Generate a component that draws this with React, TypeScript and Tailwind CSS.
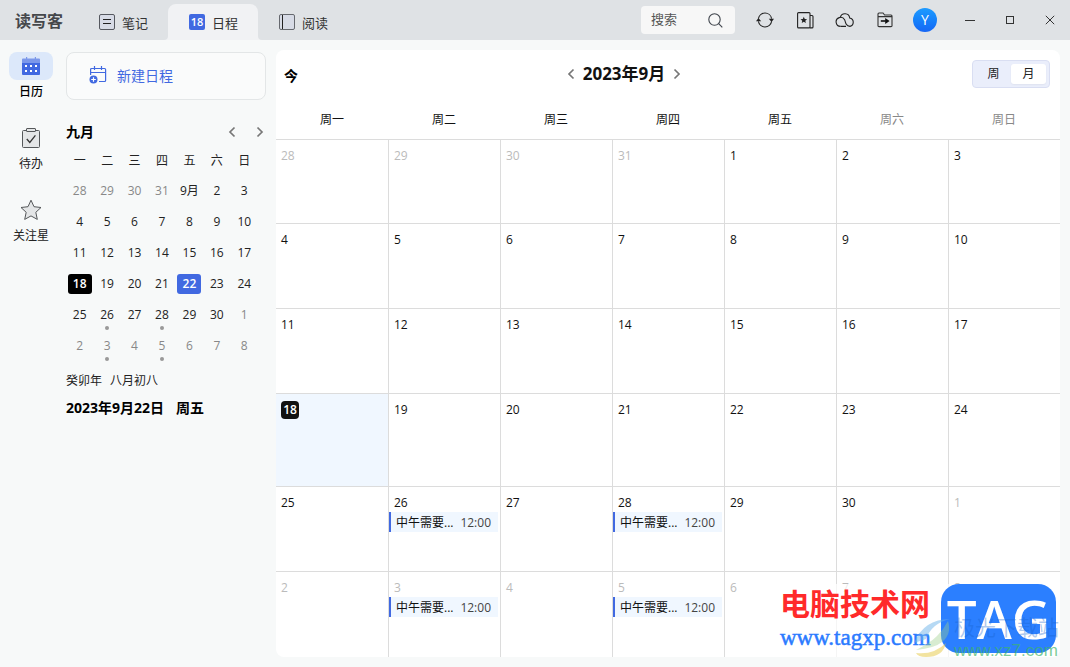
import React from 'react';

type DayCell = {
  label: string;
  muted?: boolean;
  today?: boolean;
  selected?: boolean;
  event?: boolean;
};

const WEEK = ['一', '二', '三', '四', '五', '六', '日'];
const ROW_HEIGHTS = ['h-[84px]', 'h-[85px]', 'h-[85px]', 'h-[93px]', 'h-[85px]', ''];

// 42 days starting from 8/28
const days: DayCell[] = Array.from({ length: 42 }, (_, i) => {
  if (i < 4) return { label: String(28 + i), muted: true };
  if (i < 34) {
    const d = i - 3;
    return { label: String(d), today: d === 18, selected: d === 22, event: d === 26 || d === 28 };
  }
  const d = i - 33;
  return { label: String(d), muted: true, event: d === 3 || d === 5 };
});

const weeks = Array.from({ length: 6 }, (_, i) => days.slice(i * 7, i * 7 + 7));

const Chevron: React.FC<{ right?: boolean }> = ({ right }) => (
  <svg width="8" height="12" viewBox="0 0 8 12" fill="none" stroke="#777" strokeWidth="1.7">
    <path d={right ? 'M1.5 1.5 6 6 1.5 10.5' : 'M6.5 1.5 2 6 6.5 10.5'} />
  </svg>
);

const NoteIcon = () => (
  <svg width="16" height="16" viewBox="0 0 16 16" fill="#d7dbe6" stroke="#55585f">
    <rect x="0.5" y="0.5" width="15" height="15" rx="1.5" />
    <path d="M4 5.5h8M4 9.5h8" stroke="#222" />
  </svg>
);

const ReadIcon = () => (
  <svg width="16" height="16" viewBox="0 0 16 16" fill="#d7dbe6" stroke="#66696f">
    <rect x="0.5" y="0.5" width="15" height="15" rx="1.5" />
    <path d="M3.5 1v14" stroke="#222" />
  </svg>
);

const TitleBar: React.FC = () => (
  <header className="flex h-10 shrink-0 items-center bg-[#dfe2e5]">
    <h1 className="w-[78px] pt-0.5 pl-[15px] text-[16px] leading-6 font-bold text-[#45474b]">读写客</h1>
    <nav className="flex h-full items-end text-[13px] text-[#333]">
      <button className="flex h-9 w-[90px] items-center gap-[7px] pl-[21px]">
        <NoteIcon />
        <span className="leading-6 pt-0.5">笔记</span>
      </button>
      <button className="relative flex h-9 w-[90px] items-center gap-[7px] rounded-t-lg bg-[#f1f2f4] pl-[21px]">
        <span className="flex h-4 w-4 items-center justify-center rounded-[2px] bg-[#4169e1] text-[11px] leading-4 font-semibold text-white">
          18
        </span>
        <span className="leading-6 pt-0.5">日程</span>
        <svg className="absolute bottom-0 -left-1" width="4" height="4" viewBox="0 0 4 4">
          <path d="M4 0v4H0Q4 4 4 0" fill="#f1f2f4" />
        </svg>
        <svg className="absolute -right-1 bottom-0" width="4" height="4" viewBox="0 0 4 4">
          <path d="M0 0v4h4Q0 4 0 0" fill="#f1f2f4" />
        </svg>
      </button>
      <button className="flex h-9 w-[90px] items-center gap-[7px] pl-[21px]">
        <ReadIcon />
        <span className="leading-6 pt-0.5">阅读</span>
      </button>
    </nav>

    <label className="mr-[10px] ml-auto flex h-7 w-[94px] items-center rounded bg-[#f7f7f7] pr-3 pl-[10px]">
      <input
        type="text"
        aria-label="搜索"
        placeholder="搜索"
        className="w-full min-w-0 bg-transparent text-[13px] outline-none placeholder:text-[#555]"
      />
      <svg className="shrink-0" width="15" height="15" viewBox="0 0 15 15" fill="none" stroke="#3f444c" strokeWidth="1.1">
        <circle cx="6.5" cy="6.5" r="5.7" />
        <path d="m10.7 10.7 3.6 3.6" />
      </svg>
    </label>

    <div className="mr-[5px] flex items-center">
      <button aria-label="同步" className="flex h-10 w-10 items-center justify-center">
        <svg width="18" height="16" viewBox="0 0 18 16" fill="none" stroke="#222" strokeWidth="1.1">
          <path d="M2.4 6.6A6.7 6.7 0 0 1 15.6 6.6M15.6 9.4A6.7 6.7 0 0 1 2.4 9.4" />
          <path d="M0 9.2 2.4 6l2.8 3.2zM12.8 6.8H18L15.6 10z" fill="#222" stroke="none" />
        </svg>
      </button>
      <button aria-label="收藏" className="flex h-10 w-10 items-center justify-center">
        <svg width="17" height="17" viewBox="0 0 17 17" fill="none" stroke="#222" strokeWidth="1.1">
          <rect x="0.6" y="0.6" width="12.4" height="15.3" rx="1" />
          <path d="M13 3.5h2q1 0 1 1v10.4q0 1-1 1h-2" />
          <path d="m6.8 4.8.95 2.2 2.35.2-1.8 1.5.55 2.3-2.05-1.2-2.05 1.2.55-2.3L3.5 7.2l2.35-.2z" fill="#222" stroke="none" />
        </svg>
      </button>
      <button aria-label="云" className="flex h-10 w-10 items-center justify-center">
        <svg width="20" height="16" viewBox="0 0 20 16" fill="none" stroke="#222" strokeWidth="1.1">
          <path d="M5.6 14.4a4.5 4.5 0 1 1 4-6.6c.8 1.6.7 2.8 1.7 4.5.8 1.4 2 2.1 3.7 2.1" />
          <path d="M5.6 14.4h5.4M5.3 5.3a4.8 4.8 0 0 1 9.4.7 4.3 4.3 0 0 1 .3 8.4" />
        </svg>
      </button>
      <button aria-label="导出" className="flex h-10 w-10 items-center justify-center">
        <svg width="16" height="16" viewBox="0 0 16 16" fill="none" stroke="#333" strokeWidth="1.1">
          <path d="M1 14V2q0-1 1-1h4l1.6 2H14q1 0 1 1v10q0 .6-1 .6H2q-1 0-1-.6zM1.5 4.6H15" />
          <path d="M3.8 9h5" stroke="#111" strokeWidth="1.6" />
          <path d="M8.2 5.9 12.6 9l-4.4 3.1z" fill="#111" stroke="none" />
        </svg>
      </button>
      <button aria-label="账户" className="flex h-10 w-10 items-center justify-center">
        <span className="flex h-6 w-6 items-center justify-center rounded-full bg-linear-to-b from-[#1e9bff] to-[#1766f5] text-[14px] leading-6 text-white">
          Y
        </span>
      </button>
    </div>

    <button aria-label="最小化" className="flex h-10 w-10 items-center justify-center">
      <svg width="10" height="10" viewBox="0 0 10 10" stroke="#333"><path d="M0 5.5h10" /></svg>
    </button>
    <button aria-label="最大化" className="flex h-10 w-10 items-center justify-center">
      <svg width="8" height="8" viewBox="0 0 8 8" fill="none" stroke="#333"><rect x="0.5" y="0.5" width="7" height="7" /></svg>
    </button>
    <button aria-label="关闭" className="flex h-10 w-10 items-center justify-center">
      <svg width="10" height="10" viewBox="0 0 10 10" fill="none" stroke="#333"><path d="m.8.8 8.4 8.4M9.2.8.8 9.2" /></svg>
    </button>
  </header>
);

const SideNav: React.FC = () => (
  <nav className="flex w-[62px] shrink-0 flex-col items-center pt-3 text-[12px] leading-6 text-[#222]">
    <button className="flex h-[72px] flex-col items-center font-medium text-black">
      <span className="flex h-7 w-11 items-center justify-center rounded-lg bg-[#dce8fa]">
        <svg width="18" height="18" viewBox="0 0 18 18">
          <path d="M0 6h18v11q0 1-1 1H1q-1 0-1-1z" fill="#4169e1" />
          <path d="M0 6V2.5q0-1 1-1h3V0h1.2v1.5h7.6V0H14v1.5h3q1 0 1 1V6z" fill="#7c98ea" />
          <path d="M3 8h2v2H3zM8 8h2v2H8zM13 8h2v2h-2zM3 13h2v2H3zM8 13h2v2H8zM13 13h2v2h-2z" fill="#fff" />
        </svg>
      </span>
      日历
    </button>
    <button className="flex h-[72px] flex-col items-center">
      <span className="flex h-7 w-11 items-center justify-center">
        <svg width="18" height="20" viewBox="0 0 18 20" fill="#e4e6e7" stroke="#55585a">
          <rect x="0.5" y="2.5" width="17" height="17" rx="1" />
          <rect x="4.5" y="0.5" width="9" height="3" rx="0.5" />
          <path d="m4.8 11 3 3.4 5.6-7" fill="none" stroke="#333" strokeWidth="1.3" />
        </svg>
      </span>
      待办
    </button>
    <button className="flex h-[72px] flex-col items-center">
      <span className="flex h-7 w-11 items-center justify-center">
        <svg width="22" height="22" viewBox="0 0 22 22" fill="#e4e6e7" stroke="#55585a">
          <path d="m11 1.2 3 6.5 7 .8-5.2 4.8 1.5 7.1L11 16.9l-6.3 3.5 1.5-7.1L1 8.5l7-.8z" />
        </svg>
      </span>
      关注星
    </button>
  </nav>
);

const MiniCalendar: React.FC = () => (
  <section className="text-[#222]">
    <div className="-mr-2 flex h-6 items-center">
      <h2 className="flex-1 text-[14px] leading-6 font-bold text-black">九月</h2>
      <button aria-label="上个月" className="flex w-7 justify-center"><Chevron /></button>
      <button aria-label="下个月" className="flex w-7 justify-center"><Chevron right /></button>
    </div>
    <div className="pr-2">
      <table className="w-full table-fixed text-center text-[12px] leading-5">
        <thead>
          <tr className="h-[31px]">
            {WEEK.map((w) => <th key={w} className="p-0 pt-0.5 font-normal">{w}</th>)}
          </tr>
        </thead>
        <tbody>
          {weeks.map((week, r) => (
            <tr key={r} className="h-[31px]">
              {week.map((day, c) => (
                <td key={c} className="relative p-0">
                  <button
                    className={`h-5 w-6 rounded-[3px] whitespace-nowrap ${
                      day.today
                        ? 'bg-black font-semibold text-white'
                        : day.selected
                          ? 'bg-[#4169e1] font-semibold text-white'
                          : day.muted
                            ? 'text-[#888]'
                            : ''
                    }`}
                  >
                    <span className="-mx-2">{r === 0 && c === 4 ? '9月' : day.label}</span>
                  </button>
                  {day.event && (
                    <span className="absolute bottom-0 left-1/2 h-1 w-1 -translate-x-1/2 rounded-full bg-[#999]" />
                  )}
                </td>
              ))}
            </tr>
          ))}
        </tbody>
      </table>
    </div>
    <p className="mt-2 flex gap-2 text-[12px] leading-6">
      <span>癸卯年</span>
      <span>八月初八</span>
    </p>
    <p className="mt-1 flex gap-3 text-[14px] leading-[22px] font-bold text-black">
      <span>2023年9月22日</span>
      <span>周五</span>
    </p>
  </section>
);

const MonthView: React.FC = () => (
  <main className="m-[10px] flex min-w-0 flex-1 flex-col overflow-hidden rounded-lg bg-white">
    <div className="flex h-12 shrink-0 items-center pr-[10px]">
      <button className="w-8 pt-1 pl-2 text-left text-[14px] leading-5 font-bold text-black">今</button>
      <div className="mr-8 flex flex-1 items-center justify-center gap-2">
        <button aria-label="上个月"><Chevron /></button>
        <h2 className="text-[17px] leading-6 font-bold text-[#111]">2023年9月</h2>
        <button aria-label="下个月"><Chevron right /></button>
      </div>
      <div className="flex h-7 w-[78px] rounded border border-[#d9def2] bg-[#eaeefb] p-[3px] text-[12px] text-[#222]">
        <button className="flex-1">周</button>
        <button className="flex-1 rounded-[3px] bg-white shadow-xs">月</button>
      </div>
    </div>
    <div className="flex-1">
      <table className="h-full w-full table-fixed border-separate border-spacing-0 text-[12px]">
        <thead>
          <tr className="h-[41px]">
            {WEEK.map((w, i) => (
              <th key={w} className={`p-0 pt-0.5 font-normal ${i > 4 ? 'text-[#888]' : 'text-[#111]'}`}>
                周{w}
              </th>
            ))}
          </tr>
        </thead>
        <tbody>
          {weeks.map((week, r) => (
            <tr key={r} className={ROW_HEIGHTS[r]}>
              {week.map((day, c) => (
                <td
                  key={c}
                  className={`border-t border-[#dcdcdc] p-0 pt-[7px] align-top ${c > 0 ? 'border-l' : ''} ${
                    day.today ? 'bg-[#f0f7ff]' : ''
                  }`}
                >
                  <span
                    className={`flex h-[18px] items-center leading-[18px] ${
                      day.today
                        ? 'ml-[5px] w-[18px] justify-center rounded bg-[#111] font-semibold text-white'
                        : day.muted
                          ? 'pl-[5px] text-[#bbb]'
                          : 'pl-[5px] text-[#111]'
                    }`}
                  >
                    {day.label}
                  </span>
                  {day.event && (
                    <div className="mr-[2px] flex h-5 items-start border-l-2 border-[#4169e1] bg-[#f0f7ff] pr-[7px] pl-[5px] leading-[22px]">
                      <span className="flex-1 whitespace-nowrap text-[#111]">中午需要...</span>
                      <time className="text-[#444]">12:00</time>
                    </div>
                  )}
                </td>
              ))}
            </tr>
          ))}
        </tbody>
      </table>
    </div>
  </main>
);

const Watermark: React.FC = () => (
  <div className="pointer-events-none absolute right-[14px] bottom-[10px] flex h-[73px] w-[276px] bg-white/70">
    <div className="pt-1 whitespace-nowrap">
      <p className="text-[30px] leading-8 font-bold text-[#ff2a2a]">电脑技术网</p>
      <p className="pt-0.5 font-['Liberation_Serif',serif] text-[23px] leading-8 text-[#2b7bff] [-webkit-text-stroke:0.5px_#2b7bff]">
        www.tagxp.com
      </p>
    </div>
    <div className="absolute top-0 right-0 flex h-[69px] w-[115px] items-center justify-center rounded-[18px] bg-[#2b7fff] text-[53px] leading-[68px] font-semibold text-white">
      TAG
    </div>
    <svg className="absolute bottom-0 left-[132px]" width="50" height="40" viewBox="0 0 50 40">
      <path d="M2 26Q12 2 38 2 20 6 14 22z" fill="#6db3ea" opacity=".5" />
      <path d="M36 4q4 13-6 21-7 6-26 8 14-7 21-14Q32 12 36 4z" fill="#9dcf8c" opacity=".4" />
      <path d="M4 36q18 2 30-10-3 14-20 14Q6 40 4 36z" fill="#e6c840" opacity=".5" />
    </svg>
    <div className="absolute right-[-3px] bottom-[-4px] whitespace-nowrap">
      <p className="text-[21px] leading-7 text-[#1762cd]/35">极光下载站</p>
      <p className="font-['Liberation_Sans',sans-serif] text-[17px] leading-5 text-[#3eb56b]/70">www.xz7.com</p>
    </div>
  </div>
);

const App: React.FC = () => {
  return (
    <div className="relative flex min-h-screen flex-col bg-[#f7f9f9] font-['Open_Sans','Noto_Sans_CJK_SC',sans-serif]">
      <TitleBar />
      <div className="flex flex-1">
        <SideNav />
        <aside className="ml-1 w-[200px] shrink-0 pt-3">
          {/* New schedule */}
          <button className="mb-5 flex h-12 w-full items-center gap-[10px] rounded-lg border border-[#e3e6e7] bg-[#fafbfb] pb-0.5 pl-[22px] text-[14px] text-[#4169e1]">
            <svg width="18" height="18" viewBox="0 0 18 18" fill="none" stroke="#4169e1" strokeWidth="1.2">
              <path d="M1.6 9V3.5q0-1 1-1h13q1 0 1 1v11q0 1-1 1H10M1.6 6.5h15M5.5 0v4M12.5 0v4" />
              <circle cx="4.5" cy="13.5" r="4" fill="#4169e1" stroke="none" />
              <path d="M4.5 11.2v4.6M2.2 13.5h4.6" stroke="#fff" />
            </svg>
            新建日程
          </button>
          <MiniCalendar />
        </aside>
        <MonthView />
      </div>
      <Watermark />
    </div>
  );
};

export default App;
